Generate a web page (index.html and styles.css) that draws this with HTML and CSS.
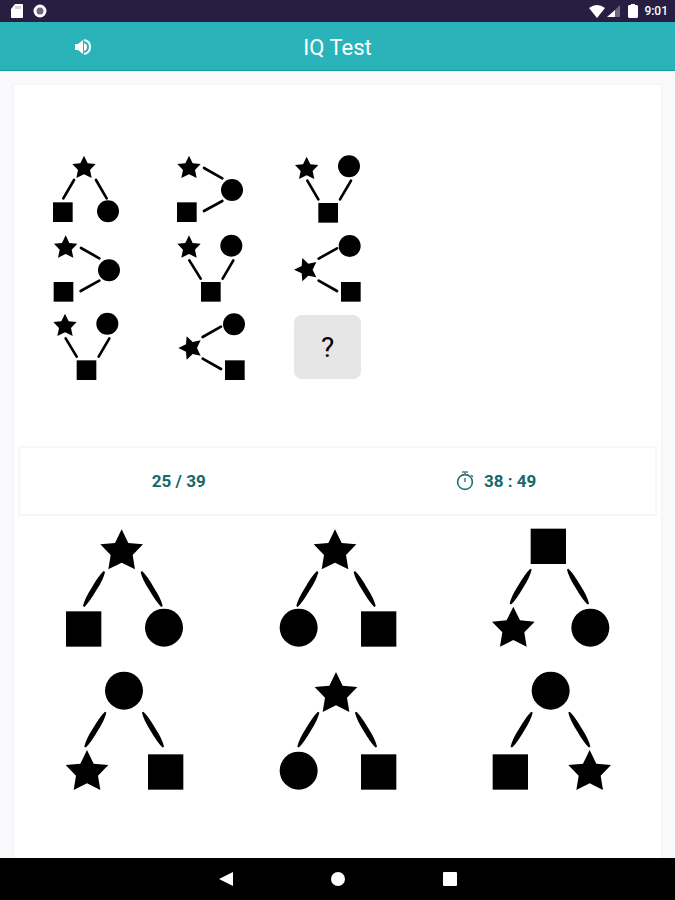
FILE: index.html
```html
<!DOCTYPE html>
<html lang="en">
<head>
    <meta charset="UTF-8">
    <meta name="viewport" content="width=device-width, initial-scale=1.0">
    <title>IQ Test</title>
    <link rel="stylesheet" href="styles.css">
</head>
<body>
    <!-- shared shapes -->
    <svg class="defs" width="0" height="0" aria-hidden="true">
        <defs>
            <path id="star" d="M0-66L20-25 64-21 33 11 40 54 0 34-40 54-33 11-64-21-20-25Z"/>
            <path id="small-star" d="M0-37L11-14 35-12 18 6 23 30 0 19-23 30-18 6-35-12-11-14Z"/>
            <circle id="circle" r="57"/>
            <circle id="small-circle" r="33"/>
            <rect id="square" width="106" height="106"/>
            <rect id="small-square" width="59" height="59"/>
            <path id="bar-left" transform="rotate(30)" d="M-2-61H3Q10-40 8 0Q8 40 2 61H-3Q-10 40-8 0Q-8-40-2-61Z"/>
            <path id="bar-right" transform="rotate(-30)" d="M2-61H-3Q-10-40-8 0Q-8 40-2 61H3Q10 40 8 0Q8-40 2-61Z"/>
        </defs>
    </svg>

    <div class="status-bar">
        <div class="status-icons">
            <svg width="12" height="14" viewBox="0 0 12 14"><path fill="#fff" d="M4 0h7a1 1 0 0 1 1 1v12a1 1 0 0 1-1 1H1a1 1 0 0 1-1-1V5z"/><path stroke="#aaa5b5" d="M5 2v3M7 2v3M9 2v3"/></svg>
            <svg width="14" height="14" viewBox="0 0 14 14"><circle cx="7" cy="7" r="5" fill="#6f6884" stroke="#fff" stroke-width="3"/></svg>
        </div>
        <div class="status-icons right">
            <svg width="16" height="13" viewBox="0 0 16 13"><path fill="#fff" d="M0 3Q8-3 16 3L8 13z"/></svg>
            <svg width="13" height="12" viewBox="0 0 13 12"><path fill="#6f6884" d="M13 0v12H8V5z"/><path fill="#fff" d="M8 5v7H0z"/></svg>
            <svg class="battery" width="10" height="14" viewBox="0 0 10 14"><path fill="#fff" d="M3 0h4v1h2l1 1v11l-1 1H1l-1-1V2l1-1h2z"/></svg>
            <span>9:01</span>
        </div>
    </div>

    <header class="app-bar">
        <button class="sound" aria-label="Sound">
            <svg width="18" height="18" viewBox="0 0 18 18"><path fill="#fff" d="M1 6v6h3l5 4V2L4 6z"/><path fill="#fff" d="M10 5q3 1 3 4t-3 4z"/><path fill="none" stroke="#fff" stroke-width="2" d="M10 2q6 1 6 7t-6 7"/></svg>
        </button>
        <h1>IQ Test</h1>
    </header>

    <main>
        <div class="card">
            <div class="matrix">
                <svg viewBox="0 0 216 198">
                    <use href="#small-star" x="96" y="42"/><use href="#small-square" x="3" y="145"/><use href="#small-circle" x="168" y="172"/>
                    <path d="M66 78L34 133M132 78L164 133"/>
                </svg>
                <svg viewBox="0 0 216 198">
                    <use href="#small-star" x="48" y="42"/><use href="#small-square" x="12" y="145"/><use href="#small-circle" x="177" y="108"/>
                    <path d="M93 42L148 73M148 141L93 171"/>
                </svg>
                <svg viewBox="0 0 216 198">
                    <use href="#small-star" x="38" y="45"/><use href="#small-circle" x="165" y="37"/><use href="#small-square" x="73" y="147"/>
                    <path d="M40 80L73 136M171 80L138 136"/>
                </svg>
                <svg viewBox="0 0 216 198">
                    <use href="#small-star" x="41" y="41"/><use href="#small-square" x="5" y="144"/><use href="#small-circle" x="171" y="109"/>
                    <path d="M87 42L142 73M142 140L86 171"/>
                </svg>
                <svg viewBox="0 0 216 198">
                    <use href="#small-star" x="48" y="41"/><use href="#small-circle" x="175" y="35"/><use href="#small-square" x="84" y="144"/>
                    <path d="M49 79L83 134M181 79L149 134"/>
                </svg>
                <svg viewBox="0 0 216 198">
                    <use href="#small-star" transform="translate(37 107) rotate(-90)"/><use href="#small-circle" x="167" y="36"/><use href="#small-square" x="141" y="144"/>
                    <path d="M74 74L129 43M74 140L129 171"/>
                </svg>
                <svg viewBox="0 0 216 198">
                    <use href="#small-star" x="39" y="36"/><use href="#small-circle" x="166" y="29"/><use href="#small-square" x="74" y="139"/>
                    <path d="M41 73L74 128M172 73L140 128"/>
                </svg>
                <svg viewBox="0 0 216 198">
                    <use href="#small-star" transform="translate(53 102) rotate(-90)"/><use href="#small-circle" x="183" y="31"/><use href="#small-square" x="156" y="139"/>
                    <path d="M89 69L144 38M89 134L144 165"/>
                </svg>
                <div class="missing">?</div>
            </div>

            <div class="info">
                <div class="progress">25 / 39</div>
                <div class="timer">
                    <svg width="18" height="20" viewBox="0 0 18 20" fill="none" stroke="#1b7472" stroke-width="1.6"><circle cx="9" cy="11" r="7.4"/><path stroke="#5d7d80" d="M6 1h6M9 1v3M9 7v4M15 4l2 2"/></svg>
                    <span>38 : 49</span>
                </div>
            </div>

            <div class="answers">
                <button aria-label="Answer 1">
                    <svg viewBox="0 0 396 396">
                        <use href="#star" x="188" y="88"/><use href="#bar-left" x="105" y="201"/><use href="#bar-right" x="278" y="201"/>
                        <use href="#square" x="21" y="268"/><use href="#circle" x="315" y="317"/>
                    </svg>
                </button>
                <button aria-label="Answer 2">
                    <svg viewBox="0 0 396 396">
                        <use href="#star" x="189" y="88"/><use href="#bar-left" x="106" y="201"/><use href="#bar-right" x="278" y="201"/>
                        <use href="#circle" x="80" y="317"/><use href="#square" x="267" y="268"/>
                    </svg>
                </button>
                <button aria-label="Answer 3">
                    <svg viewBox="0 0 396 396">
                        <use href="#square" x="137" y="20"/><use href="#bar-left" x="107" y="194"/><use href="#bar-right" x="279" y="194"/>
                        <use href="#star" x="85" y="320"/><use href="#circle" x="316" y="317"/>
                    </svg>
                </button>
                <button aria-label="Answer 4">
                    <svg viewBox="0 0 396 396">
                        <use href="#circle" x="195" y="77"/><use href="#bar-left" x="109" y="194"/><use href="#bar-right" x="282" y="194"/>
                        <use href="#star" x="84" y="321"/><use href="#square" x="267" y="268"/>
                    </svg>
                </button>
                <button aria-label="Answer 5">
                    <svg viewBox="0 0 396 396">
                        <use href="#star" x="192" y="87"/><use href="#bar-left" x="109" y="194"/><use href="#bar-right" x="282" y="194"/>
                        <use href="#circle" x="80" y="317"/><use href="#square" x="267" y="268"/>
                    </svg>
                </button>
                <button aria-label="Answer 6">
                    <svg viewBox="0 0 396 396">
                        <use href="#circle" x="197" y="77"/><use href="#bar-left" x="110" y="194"/><use href="#bar-right" x="283" y="194"/>
                        <use href="#square" x="23" y="268"/><use href="#star" x="314" y="321"/>
                    </svg>
                </button>
            </div>
        </div>
    </main>

    <nav class="nav-bar">
        <button aria-label="Back"><svg width="14" height="14" viewBox="0 0 14 14"><path fill="#fff" d="M14 0v14L0 7z"/></svg></button>
        <button aria-label="Home"><svg width="14" height="14" viewBox="0 0 14 14"><circle cx="7" cy="7" r="7" fill="#fff"/></svg></button>
        <button aria-label="Recent apps"><svg width="14" height="14" viewBox="0 0 14 14"><rect width="14" height="14" rx="1" fill="#fff"/></svg></button>
    </nav>
</body>
</html>
```
FILE: styles.css
```css
* {
    box-sizing: border-box;
}

body {
    font-family: Roboto, sans-serif;
    margin: 0;
    min-height: 100vh;
    display: flex;
    flex-direction: column;
    background-color: #f9f9fb;
}

.defs {
    position: absolute;
}

button {
    padding: 0;
    border: none;
    background: none;
    cursor: pointer;
}

svg {
    display: block;
}

.status-bar {
    display: flex;
    justify-content: space-between;
    align-items: center;
    height: 22px;
    padding: 0 7px 0 11px;
    background-color: #281e42;
    color: white;
    font-size: 12px;
    font-weight: 500;
}

.status-icons {
    display: flex;
    align-items: center;
    gap: 10px;
}

.status-icons.right {
    gap: 2px;
}

.battery {
    margin: 0 4px 0 6px;
}

.app-bar {
    display: grid;
    grid-template-columns: 1fr auto 1fr;
    align-items: center;
    height: 49px;
    padding-top: 2px;
    background-color: #2ab4b9;
    border-bottom: 1px solid #109ba0;
}

.sound {
    justify-self: start;
    margin-left: 74px;
}

h1 {
    margin: 0;
    font-size: 22px;
    font-weight: 400;
    color: white;
}

main {
    flex: 1;
    display: flex;
    padding: 13px 13px 0;
}

.card {
    flex: 1;
    padding: 0 4px;
    background-color: white;
    border: 1px solid #f3f3f4;
    border-bottom: none;
}

.matrix {
    display: grid;
    grid-template-columns: repeat(3, 72px);
    grid-auto-rows: 66px;
    gap: 14px 49px;
    padding: 69px 34px 66px;
}

.matrix svg {
    overflow: visible;
    width: 72px;
    height: 66px;
}

.matrix path {
    stroke: black;
    stroke-width: 8px;
    stroke-linecap: round;
}

.missing {
    display: flex;
    align-items: center;
    justify-content: center;
    width: 67px;
    height: 64px;
    margin-top: 1px;
    border-radius: 8px;
    background-color: #e6e6e6;
    font-size: 28px;
}

.info {
    display: flex;
    align-items: center;
    height: 70px;
    border: 2px solid #f7f7f7;
    color: #13696b;
    font-size: 17px;
    font-weight: 700;
}

.progress,
.timer {
    flex: 1;
    display: flex;
    align-items: center;
    justify-content: center;
    gap: 10px;
}

.timer {
    align-items: flex-end;
}

.answers {
    display: grid;
    grid-template-columns: repeat(3, 1fr);
    gap: 11px 0;
    justify-items: center;
    padding: 6px 0;
}

.answers svg {
    width: 132px;
    height: 132px;
}

.nav-bar {
    display: flex;
    justify-content: center;
    height: 42px;
    background-color: black;
}

.nav-bar button {
    display: flex;
    align-items: center;
    justify-content: center;
    width: 112px;
}
```
